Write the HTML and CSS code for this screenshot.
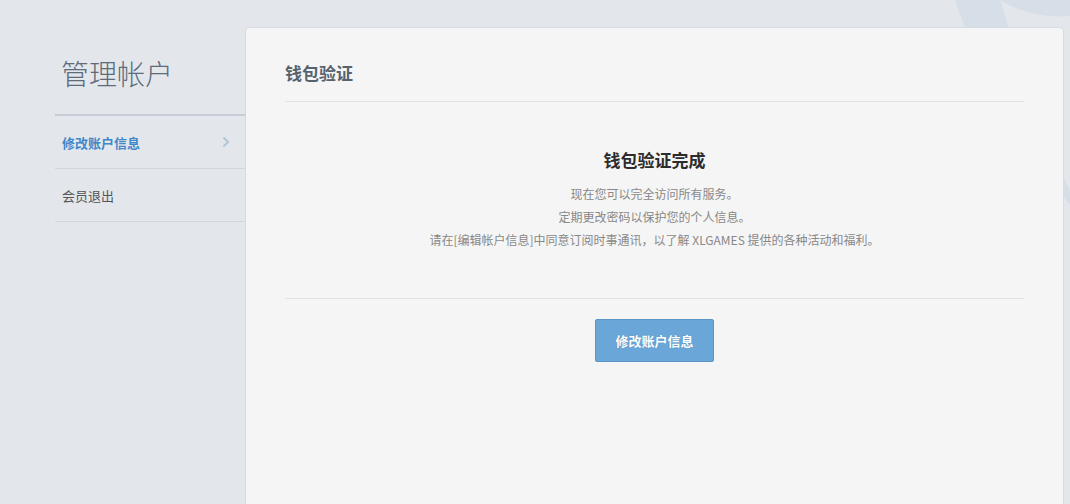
FILE: index.html
```html
<!DOCTYPE html>
<html lang="zh-CN">
<head>
<meta charset="utf-8">
<link rel="stylesheet" href="styles.css">
</head>
<body>
<svg class="bg-swoosh" width="1070" height="504" viewBox="0 0 1070 504" aria-hidden="true">
  <path d="M955 0 L1000 0 C 1010 30 1030 110 1070 190 L1070 205 C 1015 140 978 70 955 0 Z" fill="#d6dee7"/>
  <path d="M1000 0 L1070 0 L1070 16 C 1045 18 1020 12 1000 0 Z" fill="#d6dee7"/>
</svg>
<div class="page">
  <aside class="sidebar">
    <h1 class="side-title">管理帐户</h1>
    <ul class="menu">
      <li class="menu-item active"><span>修改账户信息</span>
        <svg class="chev" width="8" height="12" viewBox="0 0 8 12"><path d="M1.5 1.5 L6 6 L1.5 10.5" fill="none" stroke="#b3c6d6" stroke-width="2.2"/></svg>
      </li>
      <li class="menu-item"><span>会员退出</span></li>
    </ul>
  </aside>
  <main class="card">
    <h2 class="card-title">钱包验证</h2>
    <section class="result">
      <h3 class="result-title">钱包验证完成</h3>
      <p>现在您可以完全访问所有服务。</p>
      <p>定期更改密码以保护您的个人信息。</p>
      <p>请在[编辑帐户信息]中同意订阅时事通讯，以了解 XLGAMES 提供的各种活动和福利。</p>
    </section>
    <div class="actions">
      <button class="btn">修改账户信息</button>
    </div>
  </main>
</div>
</body>
</html>
```
FILE: styles.css
```css
html, body {
  margin: 0;
  padding: 0;
  height: 100%;
  overflow: hidden;
}
body {
  background: #e3e7ec;
  font-family: "Noto Sans CJK SC", "Noto Sans", sans-serif;
  position: relative;
}
.bg-swoosh {
  position: absolute;
  left: 0;
  top: 0;
  z-index: 0;
}
.page {
  position: relative;
  z-index: 1;
  display: flex;
  padding: 27px 0 0 55px;
}
.sidebar {
  width: 190px;
  flex: none;
}
.side-title {
  margin: 0;
  padding: 26px 0 0 6px;
  height: 89px;
  box-sizing: border-box;
  font-size: 28px;
  font-weight: 300;
  line-height: 40px;
  color: #5c6c7b;
  border-bottom: 2px solid #c5ced8;
}
.menu {
  list-style: none;
  margin: 0;
  padding: 0;
}
.menu-item {
  display: flex;
  align-items: center;
  justify-content: space-between;
  height: 52px;
  padding: 0 15px 0 7px;
  border-bottom: 1px solid #d0d8df;
  font-size: 13px;
  color: #555;
}
.menu-item.active {
  color: #3f87c9;
  font-weight: 700;
}
.card {
  flex: 1;
  margin-right: 6px;
  height: 482px;
  background: #f5f5f5;
  border: 1px solid #d3dbe2;
  border-radius: 4px;
  padding: 0 39px 0 39px;
}
.card-title {
  margin: 0;
  height: 74px;
  padding-top: 31px;
  box-sizing: border-box;
  font-size: 17px;
  font-weight: 700;
  line-height: 28px;
  color: #56636f;
  border-bottom: 1px solid #dfe2e5;
}
.result {
  text-align: center;
  padding: 44px 0 47px;
  border-bottom: 1px solid #dfe2e5;
}
.result-title {
  margin: 0 0 8px;
  font-size: 17px;
  font-weight: 700;
  line-height: 28px;
  color: #2c2c2c;
}
.result p {
  margin: 0;
  font-size: 12px;
  line-height: 23px;
  color: #888;
}
.actions {
  display: flex;
  justify-content: center;
  padding-top: 20px;
}
.btn {
  width: 119px;
  height: 43px;
  background: #6aa6d8;
  border: 1px solid #5b94c6;
  border-radius: 2px;
  color: #fff;
  font-family: inherit;
  font-size: 13px;
  font-weight: 700;
  text-shadow: 0 0 1px rgba(40, 80, 120, 0.4);
}
```
